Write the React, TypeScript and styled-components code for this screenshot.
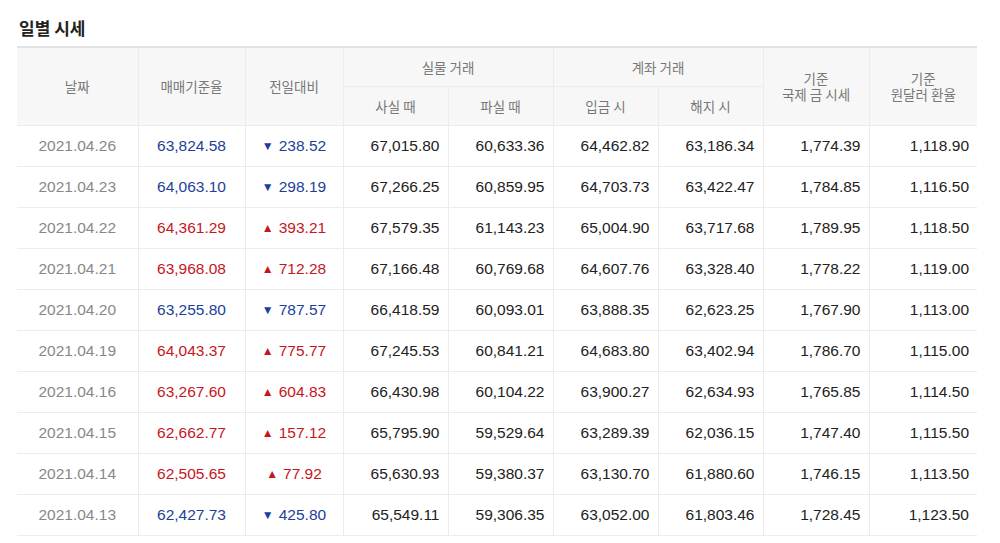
import React from "react";
import styled, { createGlobalStyle } from "styled-components";

const Global = createGlobalStyle`
  body { margin: 0; background: #fff; font-family: "Noto Sans CJK KR", "Noto Sans", sans-serif; }
`;

const Wrapper = styled.div`
  padding: 17px 23px 0 17px;
`;

const Title = styled.h2`
  margin: 0 0 7px 2px;
  font-size: 17px;
  font-weight: 700;
  color: #222;
  line-height: 22px;
`;

const Table = styled.table`
  width: 960px;
  border-collapse: collapse;
  table-layout: fixed;
  border-top: 2px solid #e2e2e2;
  font-family: "Liberation Sans", "Noto Sans CJK KR", sans-serif;
`;

const Th = styled.th`
  background: #f7f7f7;
  color: #777;
  font-weight: 400;
  font-size: 13.5px;
  line-height: 16px;
  height: 39px;
  padding: 0 4px;
  box-sizing: border-box;
  border: 1px solid #ececec;
  border-top: none;
  font-family: "Noto Sans CJK KR", sans-serif;
  &:first-child { border-left: none; }
  &:last-child { border-right: none; }
`;

const Td = styled.td<{ $align?: string; $color?: string }>`
  height: 40px;
  padding: 0 8px;
  font-size: 15.5px;
  text-align: ${(p) => p.$align || "right"};
  color: ${(p) => p.$color || "#222"};
  border: 1px solid #ececec;
  &:first-child { border-left: none; }
  &:last-child { border-right: none; }
`;

const Arrow = styled.span`
  font-size: 12px;
  margin-right: 5px;
  vertical-align: 1px;
`;

const BLUE = "#1c3f9a";
const RED = "#c8141c";

const rows = [
  ["2021.04.26", "63,824.58", -1, "238.52", "67,015.80", "60,633.36", "64,462.82", "63,186.34", "1,774.39", "1,118.90"],
  ["2021.04.23", "64,063.10", -1, "298.19", "67,266.25", "60,859.95", "64,703.73", "63,422.47", "1,784.85", "1,116.50"],
  ["2021.04.22", "64,361.29", 1, "393.21", "67,579.35", "61,143.23", "65,004.90", "63,717.68", "1,789.95", "1,118.50"],
  ["2021.04.21", "63,968.08", 1, "712.28", "67,166.48", "60,769.68", "64,607.76", "63,328.40", "1,778.22", "1,119.00"],
  ["2021.04.20", "63,255.80", -1, "787.57", "66,418.59", "60,093.01", "63,888.35", "62,623.25", "1,767.90", "1,113.00"],
  ["2021.04.19", "64,043.37", 1, "775.77", "67,245.53", "60,841.21", "64,683.80", "63,402.94", "1,786.70", "1,115.00"],
  ["2021.04.16", "63,267.60", 1, "604.83", "66,430.98", "60,104.22", "63,900.27", "62,634.93", "1,765.85", "1,114.50"],
  ["2021.04.15", "62,662.77", 1, "157.12", "65,795.90", "59,529.64", "63,289.39", "62,036.15", "1,747.40", "1,115.50"],
  ["2021.04.14", "62,505.65", 1, "77.92", "65,630.93", "59,380.37", "63,130.70", "61,880.60", "1,746.15", "1,113.50"],
  ["2021.04.13", "62,427.73", -1, "425.80", "65,549.11", "59,306.35", "63,052.00", "61,803.46", "1,728.45", "1,123.50"],
] as const;

const widths = [121, 107, 98, 105, 105, 105, 105, 106, 108];

export default function App() {
  return (
    <Wrapper>
      <Global />
      <Title>일별 시세</Title>
      <Table>
        <colgroup>
          {widths.map((w, i) => (
            <col key={i} style={{ width: w }} />
          ))}
        </colgroup>
        <thead>
          <tr>
            <Th rowSpan={2}>날짜</Th>
            <Th rowSpan={2}>매매기준율</Th>
            <Th rowSpan={2}>전일대비</Th>
            <Th colSpan={2}>실물 거래</Th>
            <Th colSpan={2}>계좌 거래</Th>
            <Th rowSpan={2}>기준<br />국제 금 시세</Th>
            <Th rowSpan={2}>기준<br />원달러 환율</Th>
          </tr>
          <tr>
            <Th>사실 때</Th>
            <Th>파실 때</Th>
            <Th>입금 시</Th>
            <Th>해지 시</Th>
          </tr>
        </thead>
        <tbody>
          {rows.map((r) => {
            const c = r[2] > 0 ? RED : BLUE;
            return (
              <tr key={r[0]}>
                <Td $align="center" $color="#888">{r[0]}</Td>
                <Td $align="center" $color={c}>{r[1]}</Td>
                <Td $align="center" $color={c}>
                  <Arrow>{r[2] > 0 ? "▲" : "▼"}</Arrow>
                  {r[3]}
                </Td>
                {r.slice(4).map((v, i) => (
                  <Td key={i}>{v}</Td>
                ))}
              </tr>
            );
          })}
        </tbody>
      </Table>
    </Wrapper>
  );
}
